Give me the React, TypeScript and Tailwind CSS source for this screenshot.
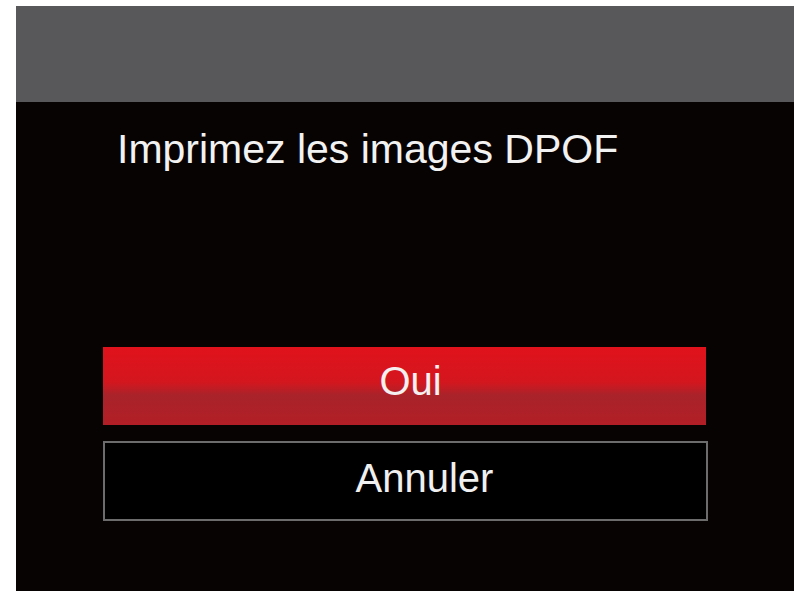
export default function App() {
  return (
    <div className="min-h-[595px] w-[796px] bg-white pt-[6px] pl-[16px] pr-[2px] pb-[4px] font-['Liberation_Sans',Arial,sans-serif]">
      <div className="flex h-[585px] w-[778px] flex-col bg-[#070303]">
        <div className="h-[96px] bg-[#58585a]" />
        <p className="mt-[23px] pl-[101px] text-[41px] leading-[48px] text-[#f2f2f2]">
          Imprimez les images DPOF
        </p>
        <div className="mt-[174px] flex flex-col gap-[16px] pl-[87px]">
          <button
            type="button"
            className="flex h-[78px] w-[603px] items-center justify-center bg-[linear-gradient(to_bottom,#e0121b_0%,#d4161e_45%,#a9232a_62%,#b21e25_100%)] pb-[10px] pl-[12px] text-[40px] leading-none text-[#f4f0f0]"
          >
            Oui
          </button>
          <button
            type="button"
            className="flex h-[80px] w-[605px] items-center justify-center border-2 border-[#6c6c6c] bg-black pb-[7px] pl-[38px] text-[40px] leading-none text-[#f0f0f0]"
          >
            Annuler
          </button>
        </div>
      </div>
    </div>
  )
}
